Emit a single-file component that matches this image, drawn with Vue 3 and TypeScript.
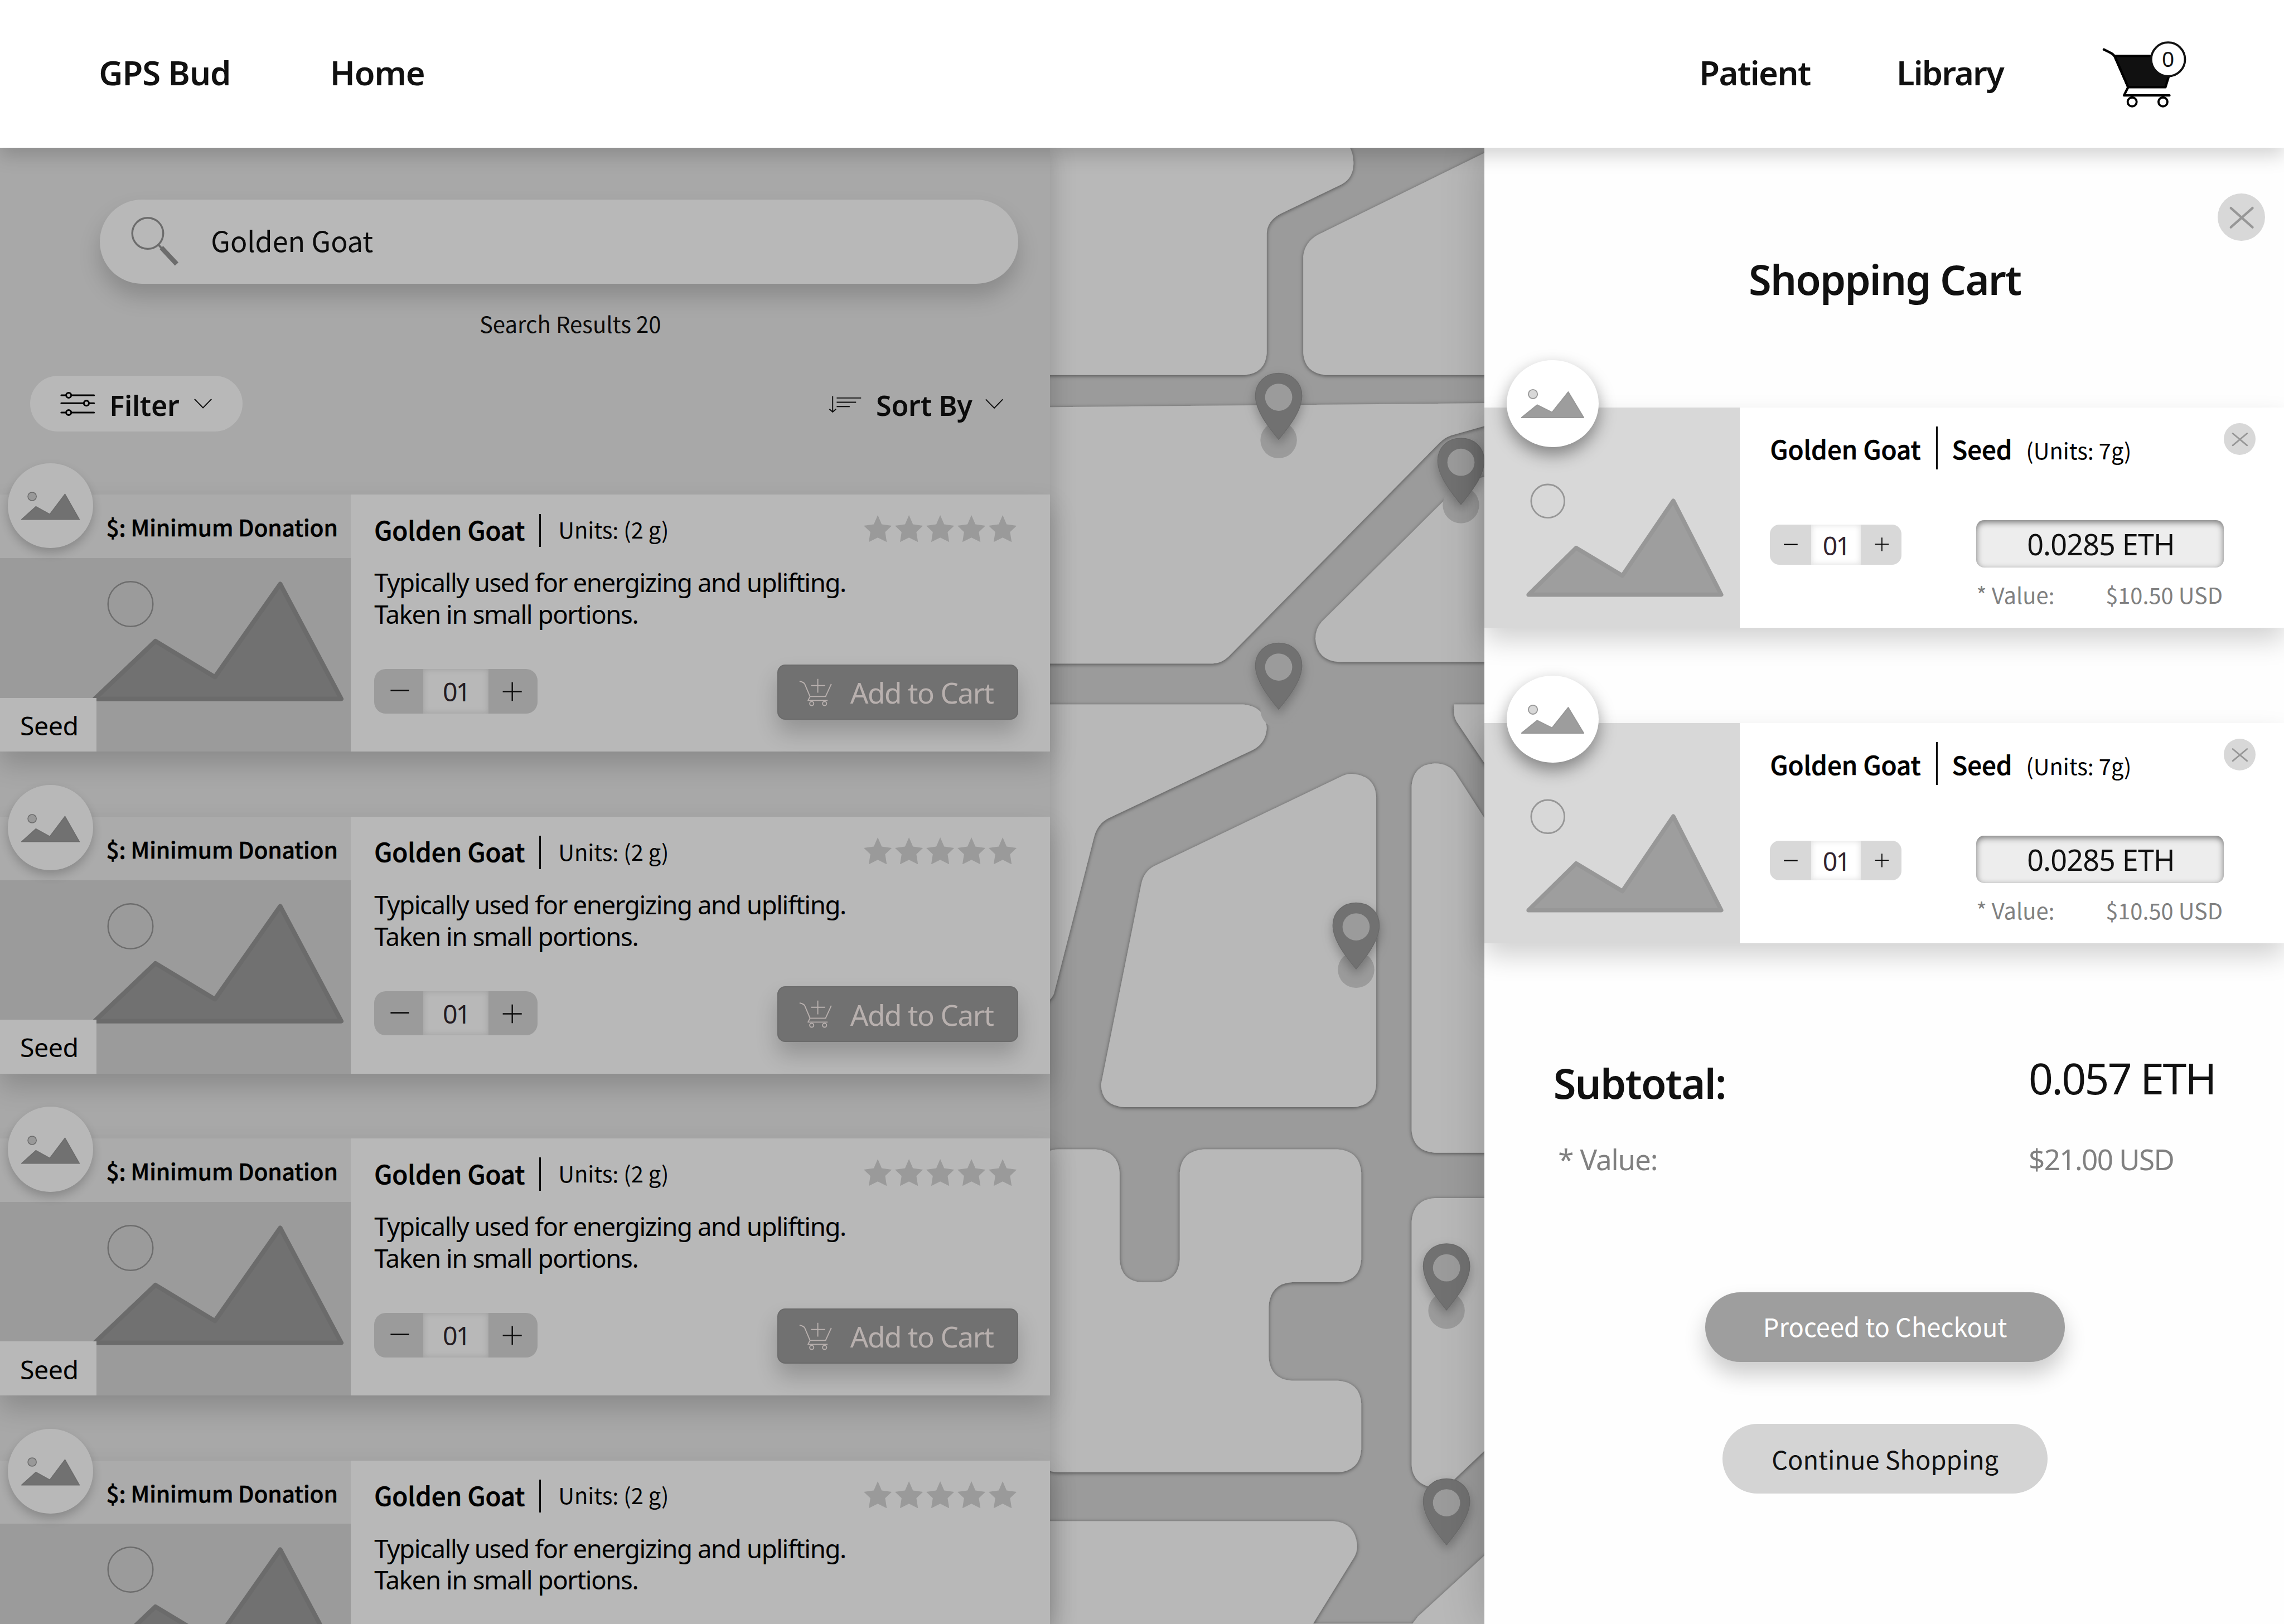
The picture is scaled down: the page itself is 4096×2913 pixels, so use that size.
<script setup lang="ts">
interface Product {
  id: number
  name: string
  kind: string
  units: string
  description: string[]
  quantity: string
  /* the last card only peeks in from below, so its lower half is left out */
  peek: boolean
}

interface CartLine {
  id: number
  name: string
  kind: string
  units: string
  quantity: string
  eth: string
  usd: string
}

const products: Product[] = [1, 2, 3, 4].map((id) => ({
  id,
  name: 'Golden Goat',
  kind: 'Seed',
  units: 'Units: (2 g)',
  description: ['Typically used for energizing and uplifting.', 'Taken in small portions.'],
  quantity: '01',
  peek: id === 4,
}))

const cart: CartLine[] = [1, 2].map((id) => ({
  id,
  name: 'Golden Goat',
  kind: 'Seed',
  units: '(Units: 7g)',
  quantity: '01',
  eth: '0.0285 ETH',
  usd: '$10.50 USD',
}))

const stars = [0, 1, 2, 3, 4]

/* City blocks of the map, drawn over the road colour */
const blocks: string[] = [
  'M1960 240H2505Q2560 262 2560 308Q2560 336 2538 348L2422 404Q2396 418 2396 442V668Q2393 706 2354 709H1960Z',
  'M2830 278L2492 444Q2468 458 2465 484V668Q2468 705 2507 709H2830Z',
  'M1960 770L2830 762V799L2744 823.6Q2732 828 2722 838L2324 1241.4Q2310 1254.8 2294 1254.8H1960Z',
  'M2830 894L2793 906Q2762 918 2731 947L2500 1175.7Q2488 1189 2488 1208Q2491 1249 2533 1252H2830Z',
  'M1960 1332H2351Q2394 1336 2396 1377Q2394 1406 2370 1418L2096.5 1547.6Q2076 1558 2069.4 1582.7L1993.5 1879Q1990 1890 1960 1915Z',
  'M2538 1468Q2547 1463.4 2557 1463.4Q2600 1466 2603 1506V2051.5Q2600 2091 2560 2094H2126Q2084 2091 2082.5 2051.5L2159 1670.7Q2164 1648 2183 1638Z',
  'M2750 1332H2830V1476L2755 1364.6Q2748 1352 2750 1332Z',
  'M2670 1487Q2673 1446 2713.5 1443.6Q2740 1444 2752.5 1461.5L2830 1582V2180.3H2713.5Q2673 2177 2670 2137.6Z',
  'M1960 2190Q1984 2173.8 2001.7 2173.8H2072Q2115 2177 2117.7 2217.8V2382Q2120 2423 2160 2425.4H2188.7Q2229 2423 2231.5 2382V2217.8Q2234 2177 2277 2173.8H2530Q2572 2177 2574.7 2217.8V2382Q2572 2423 2530 2425.4H2443.5Q2402 2428 2399.6 2472V2566Q2402 2609 2443.5 2611.4H2530Q2572 2614 2574.7 2654.8V2741.6Q2572 2782 2530 2785H2001.7Q1984 2785 1960 2770Z',
  'M2670 2310.8Q2673 2269 2713.5 2266H2830V2723L2750 2799Q2732 2814 2712 2814Q2672 2808 2670 2770.7Z',
  'M1960 2877.3H2522Q2563 2880 2567 2923Q2567 2936 2561 2946L2483 3072H1960Z',
  'M2830 2922L2682 3057.7L2671 3072H2830Z',
  'M1960 3071H2830V3110H1960Z',
]

/* Tip of every map pin */
const pins = [
  { x: 2418.5, y: 831 },
  { x: 2763.3, y: 954 },
  { x: 2418.5, y: 1341.5 },
  { x: 2565, y: 1833 },
  { x: 2736, y: 2478 },
  { x: 2736, y: 2922.5 },
]
</script>

<template>
  <div class="page">
    <header class="topbar">
      <a class="nav gps">GPS Bud</a>
      <a class="nav">Home</a>
      <a class="nav patient">Patient</a>
      <a class="nav library">Library</a>
      <a class="basket">
        <svg viewBox="3967 74 168 132" width="168" height="132" fill="none" stroke="#000" stroke-width="4.5" stroke-linecap="round" stroke-linejoin="round">
          <path d="M3977.500 93.800L3989 99.500Q3995 102 3998 107L4023.400 165" />
          <path d="M3998 106H4112L4094 165H4023.400Z" fill="#111" />
          <path d="M4023.400 165L4015.600 180.700H4101.500" />
          <circle cx="4031" cy="193" r="8.500" stroke-width="4" />
          <circle cx="4089.300" cy="193" r="8.500" stroke-width="4" />
          <circle cx="4099" cy="112.500" r="32" fill="#fff" stroke="#111" stroke-width="4" />
        </svg>
        <span class="badge">0</span>
      </a>
    </header>

    <main class="body">
      <section class="results">
        <div class="search">
          <svg viewBox="246 404 96 100" width="96" height="100" fill="none" stroke="#6c6c6c">
            <circle cx="279.700" cy="441.500" r="29.300" stroke-width="3.600" />
            <path d="M299.500 462.500L308 472" stroke-width="4" />
            <path d="M305.500 468.500L334.500 499.500" stroke-width="9" />
          </svg>
          <span>Golden Goat</span>
        </div>
        <p class="count">Search Results 20</p>

        <div class="toolbar">
          <button class="pill">
            <svg viewBox="114 738 66 52" width="66" height="52" fill="none" stroke="#000" stroke-width="3.200" stroke-linecap="round">
              <path d="M116 748.500H124.500M135.500 748.500H178M116 763.500H158M169 763.500H178M116 781.200H124.500M135.500 781.200H178" />
              <circle cx="130" cy="748.500" r="4.800" /><circle cx="163.500" cy="763.500" r="4.800" /><circle cx="130" cy="781.200" r="4.800" />
            </svg>
            <span class="label filter">Filter</span>
            <svg viewBox="366 752 36 24" width="36" height="24" fill="none" stroke="#0b0b0b" stroke-width="2"><path d="M368 755L384 771.500L400 755" /></svg>
          </button>
          <button class="sort">
            <svg viewBox="1566 742 66 44" width="66" height="44" fill="none" stroke="#0b0b0b" stroke-width="2">
              <path d="M1574.700 750V779.500M1568.500 774.500L1574.700 780L1581 774.500M1582.300 753.500H1628.500M1582.300 761.500H1619M1582.300 769.700H1607" />
            </svg>
            <span class="label by">Sort By</span>
            <svg viewBox="1863 754 36 24" width="36" height="24" fill="none" stroke="#0b0b0b" stroke-width="2"><path d="M1865 757.500L1881 774L1897 757.500" /></svg>
          </button>
        </div>

        <article v-for="p in products" :key="p.id" class="card">
          <div class="side">
            <div class="donation">$: Minimum Donation</div>
            <svg class="photo" viewBox="0 1056 663 366" width="663" height="366">
              <circle cx="246.800" cy="1143" r="42.500" fill="none" stroke="#6d6d6d" stroke-width="2.600" />
              <path d="M179 1322.500L294 1213L406.500 1281L530 1105L645.500 1322.500Z" fill="#717171" stroke="#6b6b6b" stroke-width="8.500" stroke-linejoin="round" />
            </svg>
            <span v-if="!p.peek" class="kind">{{ p.kind }}</span>
          </div>
          <div class="avatar">
            <svg viewBox="34 922 124 69" width="124" height="69" fill="#717171" stroke="#6c6c6c" stroke-width="1.600" stroke-linejoin="round">
              <circle cx="61" cy="939.400" r="8" fill="#999" />
              <path d="M41 983L68.200 958.500L94.400 973L123.200 935L150.500 983Z" />
            </svg>
          </div>
          <div class="info">
            <div class="head">
              <h3 class="name">{{ p.name }}</h3>
              <i class="bar"></i>
              <span class="units">{{ p.units }}</span>
              <div class="stars">
                <svg v-for="s in stars" :key="s" viewBox="0 0 53 51" width="53" height="51">
                  <path fill="#9a9a9a" d="M26.500 0L34 17.500L53 20L40.500 32L43.500 51L26.500 42.500L9.500 51L12.500 32L0 20L19 17.500Z" />
                </svg>
              </div>
            </div>
            <p class="desc"><template v-for="line in p.description" :key="line">{{ line }}<br /></template></p>
            <div v-if="!p.peek" class="actions">
              <div class="qty">
                <svg viewBox="0 0 93 84" width="93" height="84"><path d="M31 40.700H66" stroke="#0b0b0b" stroke-width="3" /></svg>
                <span class="amount">{{ p.quantity }}</span>
                <svg viewBox="0 0 93 84" width="93" height="84"><path d="M27 42.700H63M45 25V60.500" stroke="#0b0b0b" stroke-width="2.500" /></svg>
              </div>
              <button class="add">
                <svg viewBox="1512 1281 65 56" width="65" height="56" fill="none" stroke="#b8b0ae" stroke-width="2" stroke-linejoin="round">
                  <path d="M1514 1288.400Q1522 1290 1524 1294L1533.800 1317.300H1563.200L1574 1293.500M1533.800 1317.300L1530 1324.600H1567M1548.500 1284V1310M1535.800 1296.500H1562.500" />
                  <circle cx="1537" cy="1330.500" r="3.800" /><circle cx="1561.300" cy="1330.500" r="3.800" />
                </svg>
                <span>Add to Cart</span>
              </button>
            </div>
          </div>
        </article>
      </section>

      <section class="map">
        <svg viewBox="1986 279 822 2793" width="822" height="2793">
          <defs>
            <filter id="edge" x="-5%" y="-5%" width="110%" height="110%">
              <feDropShadow dx="0" dy="1.500" stdDeviation="4" flood-color="#000" flood-opacity="0.5" />
            </filter>
            <filter id="lift" x="-60%" y="-40%" width="220%" height="200%">
              <feDropShadow dx="0" dy="9" stdDeviation="10" flood-color="#000" flood-opacity="0.27" />
            </filter>
          </defs>
          <g filter="url(#edge)" fill="#b8b8b8">
            <path v-for="(d, i) in blocks" :key="i" :d="d" />
          </g>
          <g v-for="(p, i) in pins" :key="i" :transform="`translate(${p.x} ${p.y})`">
            <circle cx="0" cy="1" r="34.500" fill="#9b9b9b" />
            <path
              filter="url(#lift)" fill="#717171" stroke="#6b6b6b" stroke-width="1.500"
              d="M0 0C-18 -22 -44 -54 -44 -83C-44 -108 -25 -125.500 0 -125.500C25 -125.500 44 -108 44 -83C44 -54 18 -22 0 0Z"
            />
            <circle cx="0" cy="-80" r="25.700" fill="#9b9b9b" />
          </g>
        </svg>
      </section>

      <aside class="cart">
        <button class="close">
          <svg viewBox="0 0 90 90" width="90" height="90"><path d="M25 27.500L66 64M66 27.500L25 64" stroke="#979797" stroke-width="4.500" stroke-linecap="round" /></svg>
        </button>
        <h2 class="title">Shopping Cart</h2>

        <article v-for="c in cart" :key="c.id" class="item">
          <svg class="shot" viewBox="2808 771 483 417" width="483" height="417">
            <circle cx="2928" cy="948" r="31.500" fill="none" stroke="#979797" stroke-width="3" />
            <path d="M2891.500 1125L2981.600 1036.500L3069 1089L3165.300 947.500L3256 1125Z" fill="#9e9e9e" stroke="#979797" stroke-width="8" stroke-linejoin="round" />
          </svg>
          <div class="face">
            <svg viewBox="2872 732 130 64" width="130" height="64" fill="#9d9d9d" stroke="#979797" stroke-width="2" stroke-linejoin="round">
              <circle cx="2899.500" cy="745.600" r="8.500" fill="#d8d8d8" />
              <path d="M2878 790L2907.600 766L2935.700 780L2966.300 741.500L2995.500 790Z" />
            </svg>
          </div>
          <div class="detail">
            <div class="line">
              <h3 class="name">{{ c.name }}</h3>
              <i class="bar"></i>
              <span class="type">{{ c.kind }}</span>
              <span class="units">{{ c.units }}</span>
              <button class="remove">
                <svg viewBox="0 0 60 60" width="60" height="60"><path d="M17 19.500L44 42M44 19.500L17 42" stroke="#979797" stroke-width="3" stroke-linecap="round" /></svg>
              </button>
            </div>
            <div class="line second">
              <div class="qty small">
                <svg viewBox="0 0 78 75" width="78" height="75"><path d="M26.500 37.700H52.500" stroke="#0b0b0b" stroke-width="2.400" /></svg>
                <span class="amount">{{ c.quantity }}</span>
                <svg viewBox="0 0 78 75" width="78" height="75"><path d="M27 37H53M40 24.500V50" stroke="#0b0b0b" stroke-width="2" /></svg>
              </div>
              <div class="price">
                <div class="eth">{{ c.eth }}</div>
                <div class="usd"><span>* Value:</span><span>{{ c.usd }}</span></div>
              </div>
            </div>
          </div>
        </article>

        <div class="totals">
          <strong class="sub">Subtotal:</strong>
          <span class="sum">0.057 ETH</span>
          <span class="val">* Value:</span>
          <span class="val2">$21.00 USD</span>
        </div>
        <button class="cta checkout">Proceed to Checkout</button>
        <button class="cta more">Continue Shopping</button>
      </aside>
    </main>
  </div>
</template>

<style>
html,
body {
  margin: 0;
  overflow: hidden;
  background: #fff;
}
</style>

<style scoped>
.page {
  zoom: 0.9481482;
  width: 4320px;
  height: 3073px;
  overflow: hidden;
  display: flex;
  flex-direction: column;
  color: #000;
  background: #fefefe;
  font-family: 'Noto Sans', 'Open Sans', sans-serif;
  line-height: 1;
  white-space: nowrap;
}
.page * {
  box-sizing: border-box;
}
h2,
h3,
p {
  margin: 0;
  font-weight: inherit;
}
button {
  border: 0;
  padding: 0;
  background: none;
  color: inherit;
  font: inherit;
  letter-spacing: inherit;
}
svg {
  display: block;
  flex: none;
}

/* top bar */
.topbar {
  position: relative;
  z-index: 5;
  flex: none;
  height: 279px;
  padding: 0 0 2px 187px;
  display: grid;
  grid-template-columns: 437px 2590px 373px auto;
  align-items: center;
  background: #fff;
  box-shadow: 0 15px 33px rgba(0, 0, 0, 0.17);
  grid-auto-flow: column;
}
.nav {
  font-size: 63px;
  font-weight: 600;
  letter-spacing: -1.1px;
  color: #111;
}
.patient {
  letter-spacing: -1.6px;
}
.library {
  letter-spacing: -2px;
}
.basket {
  position: relative;
  margin: 3px 0 0 -4px;
}
.badge {
  position: absolute;
  left: 100px;
  top: 14px;
  width: 64px;
  text-align: center;
  font: 400 41px/46px 'Noto Sans', sans-serif;
  color: #111;
}

.body {
  display: flex;
  flex: none;
  height: 2794px;
}

/* search results */
.results {
  position: relative;
  z-index: 2;
  width: 1986px;
  flex: none;
  background: #a8a8a8;
  box-shadow: 0 0 45px rgba(0, 0, 0, 0.22);
}
.search {
  display: flex;
  align-items: center;
  width: 1737px;
  height: 159px;
  margin: 99px 0 0 189px;
  padding-left: 57px;
  border-radius: 80px;
  background: #b8b8b8;
  box-shadow: 0 24px 42px rgba(0, 0, 0, 0.18);
  font: 400 53px/1 'Noto Sans CJK SC', sans-serif;
  color: #0b0b0b;
}
.search svg {
  margin-top: -8px;
}
.search span {
  margin: -7px 0 0 57px;
}
.count {
  margin: 54px 0 0 907px;
  font: 400 42.3px/42px 'Noto Sans CJK SC', sans-serif;
  color: #0b0b0b;
}
.toolbar {
  display: flex;
  margin: 78px 0 120px 57px;
}
.pill {
  display: flex;
  align-items: center;
  width: 402px;
  height: 105px;
  padding-left: 57px;
  border-radius: 53px;
  background: #b8b8b8;
}
.sort {
  display: flex;
  align-items: center;
  margin-left: 1107px;
}
.label {
  font-size: 53px;
  font-weight: 600;
  color: #0b0b0b;
  padding-top: 6px;
  text-align: left;
}
.filter {
  width: 159px;
  margin-left: 27px;
  letter-spacing: -0.3px;
}
.by {
  width: 206px;
  margin-left: 25px;
  letter-spacing: -0.3px;
}

.card {
  position: relative;
  display: flex;
  height: 486px;
  margin-bottom: 123px;
  background: #b8b8b8;
  box-shadow: 0 24px 48px rgba(0, 0, 0, 0.18);
}
.side {
  position: relative;
  width: 663px;
  flex: none;
  background: #9b9b9b;
}
.donation {
  height: 120px;
  padding: 40px 0 0 201px;
  background: #ababab;
  font: 500 43px/43px 'Noto Sans CJK SC', sans-serif;
  letter-spacing: -0.2px;
  -webkit-text-stroke: 0.6px currentColor;
}
.kind {
  position: absolute;
  left: 0;
  bottom: 0;
  width: 182px;
  height: 102px;
  padding: 28px 0 0 38px;
  background: #b8b8b8;
  font-size: 49px;
  letter-spacing: -0.5px;
}
.avatar {
  position: absolute;
  left: 15px;
  top: -60px;
  width: 161px;
  height: 161px;
  padding: 46px 0 0 19px;
  border-radius: 50%;
  background: #b8b8b8;
  box-shadow: 0 9px 18px rgba(0, 0, 0, 0.2);
}
.info {
  flex: 1;
  padding: 36px 60px 0 44px;
}
.head {
  display: flex;
  height: 63px;
}
.name {
  width: 313px;
  margin-top: 5.6px;
  padding-left: 1px;
  font: 500 48.2px/1 'Noto Sans CJK SC', sans-serif;
  -webkit-text-stroke: 0.7px currentColor;
}
.bar {
  width: 3px;
  background: #0b0b0b;
}
.units {
  margin: 8px 0 0 33px;
  font: 400 42px/1 'Noto Sans CJK SC', sans-serif;
}
.stars {
  display: flex;
  gap: 6.2px;
  margin: 3px 3px 0 auto;
}
.desc {
  margin: 37px 0 65px 1px;
  font-size: 48px;
  line-height: 60px;
  letter-spacing: -1.45px;
}
.actions {
  display: flex;
  justify-content: space-between;
}
.qty {
  display: flex;
  width: 309px;
  height: 84px;
  margin: 9px 0 0 1px;
  border-radius: 22px;
  overflow: hidden;
  background: #9b9b9b;
}
.amount {
  width: 123px;
  padding: 18px 0 0 0;
  text-align: center;
  background: #b8b8b8;
  box-shadow: inset 0 0 12px rgba(0, 0, 0, 0.14);
  font-size: 49px;
  letter-spacing: -3px;
  color: #241c22;
}
.add {
  display: flex;
  align-items: center;
  width: 456px;
  height: 105px;
  padding-left: 38px;
  border: 3px solid #6b6b6b;
  border-radius: 15px;
  background: #717171;
  box-shadow: 0 24px 42px rgba(0, 0, 0, 0.2);
  color: #b8b0ae;
  font-size: 54px;
  letter-spacing: -1.5px;
}
.add span {
  margin: 3px 0 0 33px;
}

/* map */
.map {
  width: 822px;
  flex: none;
  overflow: hidden;
  background: #9b9b9b;
}

/* cart drawer */
.cart {
  position: relative;
  z-index: 3;
  display: flex;
  flex-direction: column;
  width: 1512px;
  flex: none;
  background: #fefefe;
  box-shadow: 0 0 78px rgba(0, 0, 0, 0.2);
}
.close,
.remove {
  flex: none;
  border-radius: 50%;
  background: #d8d8d8;
}
.close {
  width: 90px;
  height: 90px;
  margin: 87px 36px 0 auto;
}
.title {
  margin: 33px 0 204px 2px;
  text-align: center;
  font-size: 78px;
  font-weight: 600;
  letter-spacing: -1.95px;
  color: #111;
}
.item {
  position: relative;
  display: flex;
  flex: none;
  height: 417px;
  background: #fff;
  box-shadow: 0 24px 48px rgba(0, 0, 0, 0.18);
}
.item + .item {
  margin-top: 180px;
}
.shot {
  background: #d8d8d8;
}
.face {
  position: absolute;
  left: 42px;
  top: -90px;
  width: 174px;
  height: 165px;
  padding: 51px 0 0 22px;
  border-radius: 50%;
  background: #fff;
  box-shadow: 0 14px 32px rgba(0, 0, 0, 0.4);
}
.detail {
  flex: 1;
  padding: 36px 54px 0 56px;
}
.line {
  display: flex;
  height: 81px;
}
.line .name {
  width: 315px;
  margin-top: 18px;
}
.type {
  width: 139px;
  margin: 18px 0 0 27px;
  font: 500 48px/1 'Noto Sans CJK SC', sans-serif;
  -webkit-text-stroke: 0.7px currentColor;
}
.line .units {
  margin: 23px 0 0 1px;
}
.remove {
  width: 60px;
  height: 60px;
  margin: -6px 0 0 auto;
}
.second {
  margin-top: 96px;
  justify-content: space-between;
}
.small {
  width: 249px;
  height: 75px;
  border-radius: 18px;
  background: #d8d8d8;
}
.small .amount {
  width: 93px;
  padding-top: 14px;
  background: #fff;
  color: #33242f;
}
.price {
  width: 468px;
  margin-right: 60px;
}
.eth {
  height: 90px;
  padding: 17.500px 0 0 3px;
  border-radius: 15px;
  text-align: center;
  background: #ededed;
  box-shadow: inset 0 4px 12px rgba(0, 0, 0, 0.5);
  font-size: 55px;
  letter-spacing: -0.9px;
  color: #111;
}
.usd {
  display: flex;
  justify-content: space-between;
  margin-top: 29px;
  padding: 0 2px 0 0;
  font: 400 42px/1 'Noto Sans CJK SC', sans-serif;
  color: #808080;
}
.totals {
  display: grid;
  grid-template-columns: 899px auto;
  grid-template-rows: 166px 54px;
  margin: 214px 0 226px 130px;
  color: #111;
}
.sub {
  margin-top: 11px;
  font-size: 78px;
  font-weight: 600;
  letter-spacing: -1.8px;
}
.sum {
  margin-top: 1px;
  font-size: 81px;
  letter-spacing: -2.8px;
}
.val,
.val2 {
  margin-top: 1px;
  font-size: 54px;
  color: #808080;
}
.val {
  margin-left: 9px;
  letter-spacing: -1.2px;
}
.val2 {
  letter-spacing: -1.7px;
}
.cta {
  align-self: center;
  flex: none;
  height: 132px;
  border-radius: 66px;
  font: 400 47.7px/1 'Noto Sans CJK SC', sans-serif;
}
.checkout {
  width: 681px;
  padding-bottom: 5px;
  margin-left: 3px;
  background: #9e9e9e;
  color: #fff;
  box-shadow: 0 24px 42px rgba(0, 0, 0, 0.2);
}
.more {
  width: 615px;
  margin: 117px 0 0 3px;
  background: #d4d4d4;
  color: #111;
}
</style>
